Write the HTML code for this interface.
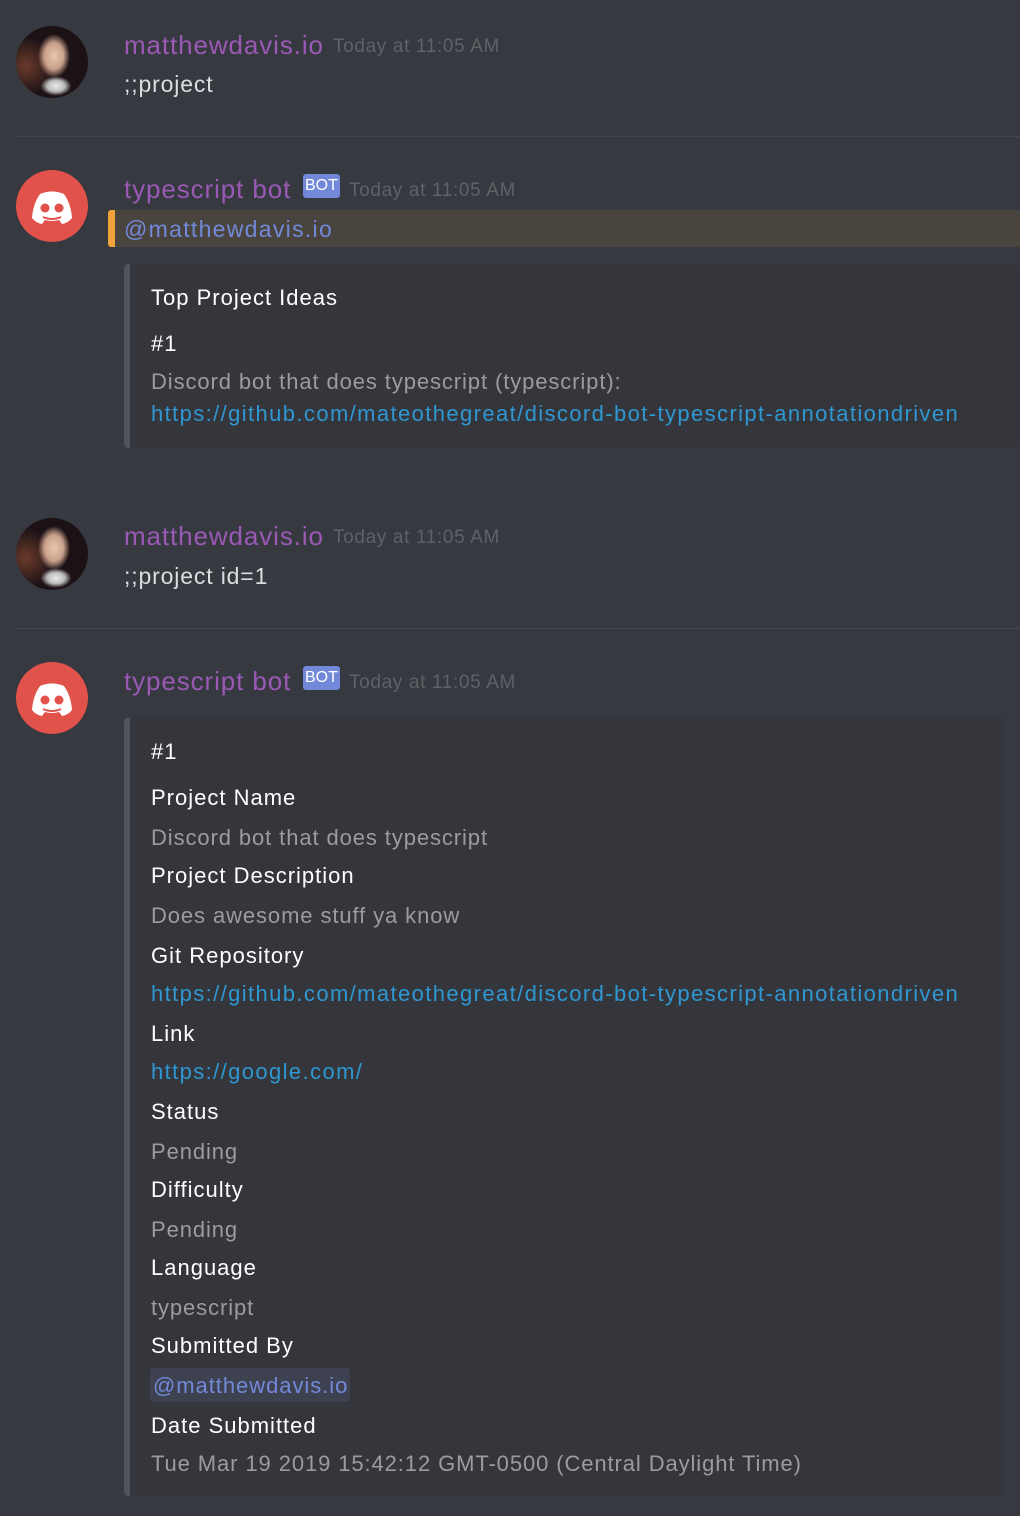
<!DOCTYPE html>
<html><head><meta charset="utf-8"><style>
html,body{margin:0;padding:0}
body{width:1020px;height:1516px;background:#36393f;position:relative;overflow:hidden;font-family:"Liberation Sans","DejaVu Sans",sans-serif}
.t{position:absolute;white-space:nowrap;line-height:30px;font-size:23px}
.name{color:#9b59b6;font-size:26px;letter-spacing:0.9px}
.ts{color:#5f6166;font-size:19px;letter-spacing:0.65px}
.msg{color:#dcddde;font-size:23px;letter-spacing:0.85px}
.f{color:#ffffff;font-size:22px;letter-spacing:1px}
.v{color:#9b9c9f;font-size:22px;letter-spacing:0.9px}
.l{color:#2f97d1;font-size:22px;letter-spacing:1.39px}
.hr{position:absolute;left:16px;right:0;height:1px;background:#42454a}
.av{position:absolute;left:16px;width:72px;height:72px;border-radius:50%;overflow:hidden}
.photo{background:radial-gradient(ellipse 16px 22px at 38px 30px,#e8c8b0 0,#c9a08a 60%,transparent 100%),radial-gradient(ellipse 22px 14px at 40px 60px,#e8e8e8 0,#bbb 40%,transparent 70%),radial-gradient(circle at 10px 40px,#6a3a2a 0,transparent 40%),#1c1216}
.bot{background:#e0524a}
.badge{position:absolute;background:#7289da;color:#fff;font-size:16px;line-height:24px;height:24px;padding:0 2px;border-radius:3px}
.embed{position:absolute;background:#34363b;border-left:6px solid #4f545c;border-radius:4px}
</style></head><body>

<div class="av photo" style="top:26px"></div>
<div class="t name" style="left:124px;top:30px">matthewdavis.io</div>
<div class="t ts" style="left:333px;top:32px">Today at 11:05 AM</div>
<div class="t msg" style="left:124px;top:69px">;;project</div>
<div class="hr" style="top:136px"></div>

<div class="av bot" style="top:170px"><svg width="72" height="72" viewBox="0 0 72 72"><path d="M24 24 Q36 19 48 24 Q55 34 56 48 Q52 53 46 54 L43 50 Q36 52 29 50 L26 54 Q20 53 16 48 Q17 34 24 24 Z" fill="#fff"/><path d="M27 47 Q36 51 45 47" stroke="#e0524a" stroke-width="2" fill="none"/><circle cx="29" cy="38" r="4.5" fill="#e0524a"/><circle cx="43" cy="38" r="4.5" fill="#e0524a"/></svg></div>
<div class="t name" style="left:124px;top:174px">typescript bot</div>
<div class="badge" style="left:303px;top:174px">BOT</div>
<div class="t ts" style="left:349px;top:176px">Today at 11:05 AM</div>
<div style="position:absolute;left:108px;top:210px;right:0;height:37px;background:#49443d;border-left:7px solid #f0a33a;border-radius:3px 0 0 3px"></div>
<div class="t" style="left:124px;top:214px;color:#7289da;font-size:23px;letter-spacing:1.3px">@matthewdavis.io</div>

<div class="embed" style="left:124px;top:264px;width:890px;height:184px"></div>
<div class="t f" style="left:151px;top:283px">Top Project Ideas</div>
<div class="t f" style="left:151px;top:329px">#1</div>
<div class="t v" style="left:151px;top:367px">Discord bot that does typescript (typescript):</div>
<div class="t l" style="left:151px;top:399px">https://github.com/mateothegreat/discord-bot-typescript-annotationdriven</div>

<div class="av photo" style="top:518px"></div>
<div class="t name" style="left:124px;top:521px">matthewdavis.io</div>
<div class="t ts" style="left:333px;top:523px">Today at 11:05 AM</div>
<div class="t msg" style="left:124px;top:561px">;;project id=1</div>
<div class="hr" style="top:628px"></div>

<div class="av bot" style="top:662px"><svg width="72" height="72" viewBox="0 0 72 72"><path d="M24 24 Q36 19 48 24 Q55 34 56 48 Q52 53 46 54 L43 50 Q36 52 29 50 L26 54 Q20 53 16 48 Q17 34 24 24 Z" fill="#fff"/><path d="M27 47 Q36 51 45 47" stroke="#e0524a" stroke-width="2" fill="none"/><circle cx="29" cy="38" r="4.5" fill="#e0524a"/><circle cx="43" cy="38" r="4.5" fill="#e0524a"/></svg></div>
<div class="t name" style="left:124px;top:666px">typescript bot</div>
<div class="badge" style="left:303px;top:666px">BOT</div>
<div class="t ts" style="left:349px;top:668px">Today at 11:05 AM</div>

<div class="embed" style="left:124px;top:718px;width:873px;height:778px"></div>
<div class="t f" style="left:151px;top:737px">#1</div>
<div class="t f" style="left:151px;top:783px">Project Name</div>
<div class="t v" style="left:151px;top:823px">Discord bot that does typescript</div>
<div class="t f" style="left:151px;top:861px">Project Description</div>
<div class="t v" style="left:151px;top:901px">Does awesome stuff ya know</div>
<div class="t f" style="left:151px;top:941px">Git Repository</div>
<div class="t l" style="left:151px;top:979px">https://github.com/mateothegreat/discord-bot-typescript-annotationdriven</div>
<div class="t f" style="left:151px;top:1019px">Link</div>
<div class="t l" style="left:151px;top:1057px">https://google.com/</div>
<div class="t f" style="left:151px;top:1097px">Status</div>
<div class="t v" style="left:151px;top:1137px">Pending</div>
<div class="t f" style="left:151px;top:1175px">Difficulty</div>
<div class="t v" style="left:151px;top:1215px">Pending</div>
<div class="t f" style="left:151px;top:1253px">Language</div>
<div class="t v" style="left:151px;top:1293px">typescript</div>
<div class="t f" style="left:151px;top:1331px">Submitted By</div>
<div style="position:absolute;left:150px;top:1368px;width:200px;height:34px;background:#3e4150;border-radius:3px"></div>
<div class="t" style="left:153px;top:1371px;color:#7289da;font-size:22px;letter-spacing:0.95px">@matthewdavis.io</div>
<div class="t f" style="left:151px;top:1411px">Date Submitted</div>
<div class="t v" style="left:151px;top:1449px">Tue Mar 19 2019 15:42:12 GMT-0500 (Central Daylight Time)</div>

</body></html>
